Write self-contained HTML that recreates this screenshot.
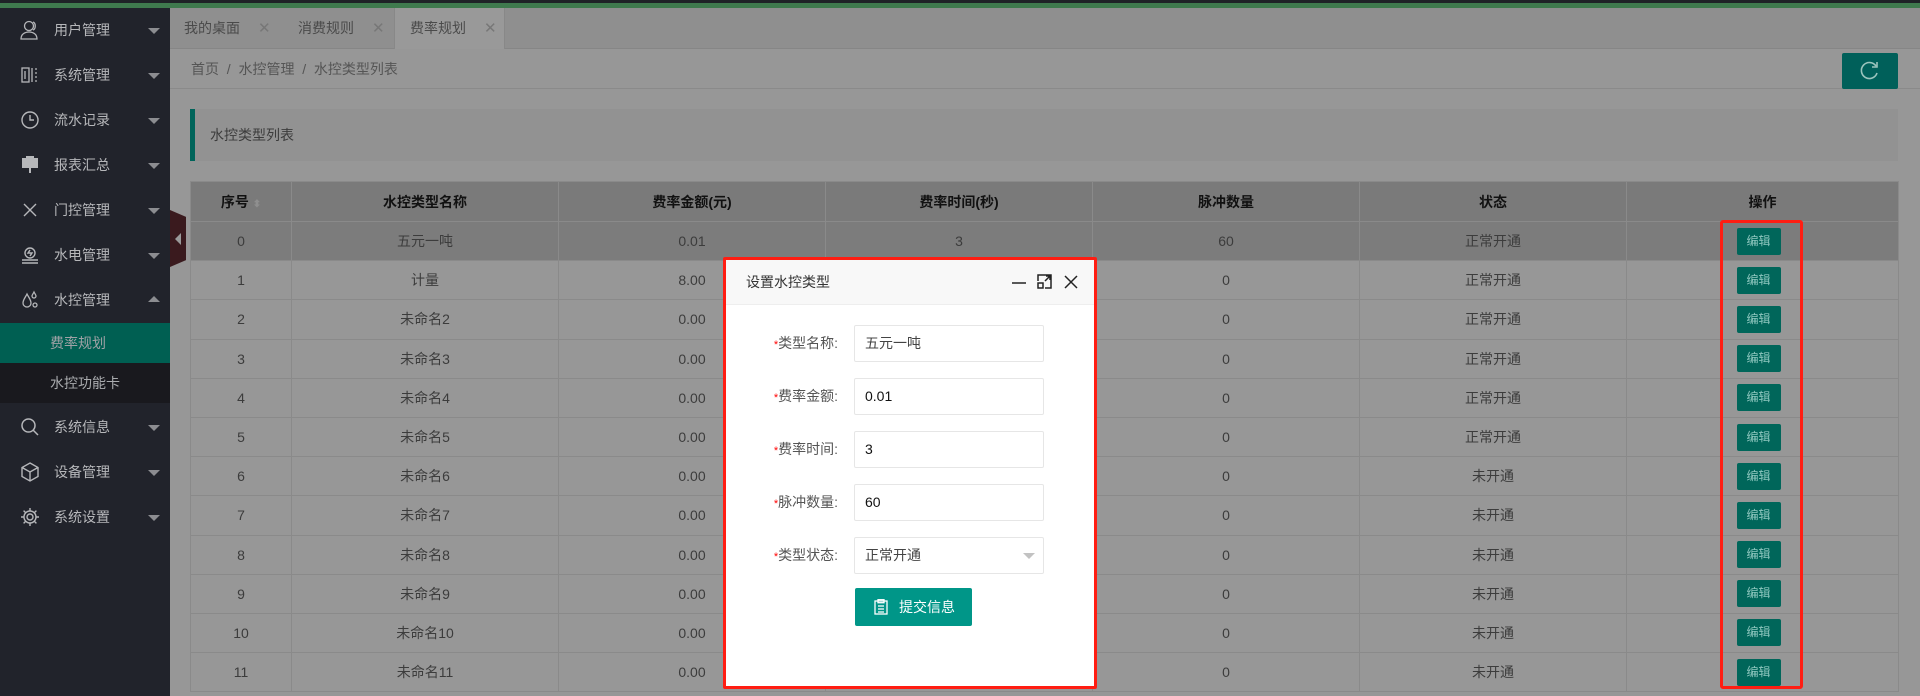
<!DOCTYPE html>
<html><head><meta charset="utf-8"><style>
*{margin:0;padding:0;box-sizing:border-box}
html,body{width:1920px;height:696px;overflow:hidden}
body{background:#979797;font-family:"Liberation Sans","Noto Sans CJK SC",sans-serif;font-size:14px}
#wrap{position:relative;width:1920px;height:696px;overflow:hidden;background:#979797}
.abs{position:absolute}
#top{left:0;top:0;width:1920px;height:3px;background:#1f2327}
#green{left:0;top:3px;width:1920px;height:5px;background:#3f7a4e}
#side{left:0;top:8px;width:170px;height:688px;background:#21232b}
.mi{position:absolute;left:0;width:170px;height:45px;color:#b6b7ba;font-size:14px;line-height:45px}
.mi .t{position:absolute;left:54px}
.mi svg{position:absolute;left:20px;top:12px}
.mi .ar{position:absolute;left:148px;top:20px;width:0;height:0;border-left:6px solid transparent;border-right:6px solid transparent;border-top:6px solid #8c8d91}
.mi .up{border-top:none;border-bottom:6px solid #8c8d91;top:18px}
.sub{position:absolute;left:0;width:170px;height:40px;line-height:40px;padding-left:50px;color:#9fa2a6}
#tabs{left:170px;top:8px;width:1750px;height:41px;background:#8f8f8f;border-bottom:1px solid #868686}
.tab{position:absolute;top:0;height:41px;line-height:40px;color:#4a4a4a;font-size:14px}
.tab .x{color:#777;margin-left:18px;font-size:15px}
#crumb{left:170px;top:49px;width:1750px;height:40px;border-bottom:1px solid #8a8a8a;line-height:40px;color:#555;padding-left:21px}
#refresh{left:1842px;top:53px;width:56px;height:36px;background:#00605a;border-radius:2px}
#title{left:190px;top:109px;width:1708px;height:52px;background:#929292;border-left:5px solid #00645a;line-height:52px;padding-left:15px;color:#3c3c3c;font-size:14px}
table{position:absolute;left:190px;top:181px;width:1708px;border-collapse:collapse;table-layout:fixed;font-size:14px}
td,th{border:1px solid #8a8a8a;text-align:center;height:39.2px;color:#3c3c3c;font-weight:normal;padding:0}
th{background:#7a7a7a;color:#111;font-weight:bold;height:40px}
tr.h td{background:#7c7c7c}
.eb{display:inline-block;width:44px;height:27px;line-height:27px;background:#00665a;color:#8fc7bf;font-size:12px;border-radius:2px;vertical-align:middle;margin-left:-8px}
#redbox{left:1720px;top:220px;width:83px;height:469px;border:3px solid #ff1d12;border-radius:3px}
#dlg{left:723px;top:257px;width:374px;height:432px;background:#fff;border:3px solid #ff1d12;border-radius:2px}
#dh{position:absolute;left:0;top:0;width:368px;height:45px;background:#f8f8f8;border-bottom:1px solid #eee;line-height:45px;padding-left:20px;color:#333;font-size:14px}
.lbl{position:absolute;left:30px;width:82px;text-align:right;color:#555;font-size:14px;line-height:37px}
.lbl b{color:#f00;font-weight:normal;font-size:11px}
.inp{position:absolute;left:128px;width:190px;height:37px;border:1px solid #e6e6e6;border-radius:2px;line-height:35px;padding-left:10px;color:#111;font-size:14px}
#btn{position:absolute;left:129px;top:328px;width:117px;height:38px;background:#009688;border-radius:2px;color:#fff;line-height:38px;font-size:14px;padding-left:44px}
</style></head><body><div id="wrap">
<div id="top" class="abs"></div><div id="green" class="abs"></div>
<div id="side" class="abs">
 <div class="mi" style="top:0"><svg width="20" height="20" viewBox="0 0 20 20" fill="none" stroke="#b6b7ba" stroke-width="1.3"><circle cx="9" cy="6" r="4.5"/><path d="M1 19c0-5 4-7 8-7s8 2 8 7z"/><path d="M13 2c3 1 3 7 0 8"/></svg><span class="t">用户管理</span><i class="ar"></i></div>
 <div class="mi" style="top:45px"><svg width="20" height="20" viewBox="0 0 20 20" fill="none" stroke="#b6b7ba" stroke-width="1.3"><rect x="2" y="3" width="7" height="14"/><path d="M5 6v8M12 3v14M15 4h2M15 8h2M15 12h2M15 16h2"/></svg><span class="t">系统管理</span><i class="ar"></i></div>
 <div class="mi" style="top:90px"><svg width="20" height="20" viewBox="0 0 20 20" fill="none" stroke="#b6b7ba" stroke-width="1.4"><circle cx="10" cy="10" r="8"/><path d="M10 5v5h4"/></svg><span class="t">流水记录</span><i class="ar"></i></div>
 <div class="mi" style="top:135px"><svg width="20" height="20" viewBox="0 0 20 20" fill="#b6b7ba"><rect x="2" y="3" width="16" height="10"/><rect x="9" y="13" width="2" height="5"/><rect x="6" y="1" width="8" height="2"/></svg><span class="t">报表汇总</span><i class="ar"></i></div>
 <div class="mi" style="top:180px"><svg width="20" height="20" viewBox="0 0 20 20" fill="none" stroke="#b6b7ba" stroke-width="1.4"><path d="M4 4l12 12M16 4L4 16"/></svg><span class="t">门控管理</span><i class="ar"></i></div>
 <div class="mi" style="top:225px"><svg width="20" height="20" viewBox="0 0 20 20" fill="none" stroke="#b6b7ba" stroke-width="1.4"><circle cx="10" cy="8" r="5"/><path d="M10 5l-2 3h4l-2 3M2 15h16M2 18h16"/></svg><span class="t">水电管理</span><i class="ar"></i></div>
 <div class="mi" style="top:270px"><svg width="20" height="20" viewBox="0 0 20 20" fill="none" stroke="#b6b7ba" stroke-width="1.3"><path d="M7 4C5 8 3 10 3 13a4 4 0 0 0 8 0c0-3-2-5-4-9zM14 2c-1 2-2 3-2 4a2 2 0 0 0 4 0c0-1-1-2-2-4z"/><circle cx="15" cy="15" r="2"/></svg><span class="t">水控管理</span><i class="ar up"></i></div>
 <div class="sub" style="top:315px;background:#005f52">费率规划</div>
 <div class="sub" style="top:355px;background:#19191e;color:#a9abae">水控功能卡</div>
 <div class="mi" style="top:397px"><svg width="20" height="20" viewBox="0 0 20 20" fill="none" stroke="#b6b7ba" stroke-width="1.5"><circle cx="8.5" cy="8.5" r="6.5"/><path d="M13 13l5 5"/></svg><span class="t">系统信息</span><i class="ar"></i></div>
 <div class="mi" style="top:442px"><svg width="20" height="20" viewBox="0 0 20 20" fill="none" stroke="#b6b7ba" stroke-width="1.4"><path d="M10 1l8 4.5v9L10 19l-8-4.5v-9z"/><path d="M2 5.5L10 10l8-4.5M10 10v9"/></svg><span class="t">设备管理</span><i class="ar"></i></div>
 <div class="mi" style="top:487px"><svg width="20" height="20" viewBox="0 0 20 20" fill="none" stroke="#b6b7ba" stroke-width="1.4"><circle cx="10" cy="10" r="3"/><path d="M10 1v3M10 16v3M1 10h3M16 10h3M3.6 3.6l2.1 2.1M14.3 14.3l2.1 2.1M3.6 16.4l2.1-2.1M14.3 5.7l2.1-2.1"/><circle cx="10" cy="10" r="6"/></svg><span class="t">系统设置</span><i class="ar"></i></div>
</div>
<div class="abs" style="left:170px;top:210px;width:16px;height:57px;background:#3a1a1e;clip-path:polygon(0 0,100% 12%,100% 88%,0 100%)"></div>
<div class="abs" style="left:175px;top:233px;width:0;height:0;border-top:6px solid transparent;border-bottom:6px solid transparent;border-right:6px solid #9a9a9a"></div>
<div id="tabs" class="abs">
 <div class="tab" style="left:14px">我的桌面<span class="x">✕</span></div>
 <div class="tab" style="left:128px">消费规则<span class="x">✕</span></div>
 <div class="tab" style="left:224px;width:111px;background:#999;padding-left:15px;border-left:1px solid #888;border-right:1px solid #888">费率规划<span class="x">✕</span></div>
</div>
<div id="crumb" class="abs">首页 &nbsp;/&nbsp; 水控管理 &nbsp;/&nbsp; 水控类型列表</div>
<div id="refresh" class="abs"><svg width="56" height="36" viewBox="0 0 56 36" fill="none" stroke="#9bc4bd" stroke-width="1.6"><path d="M34 13a8 8 0 1 0 1 7"/><path d="M35 9v5h-5"/></svg></div>
<div id="title" class="abs">水控类型列表</div>
<table>
<colgroup><col style="width:101px"><col style="width:267px"><col style="width:267px"><col style="width:267px"><col style="width:267px"><col style="width:267px"><col style="width:272px"></colgroup>
<tr><th>序号 <span style="color:#8f8f8f;font-size:10px">⬍</span></th><th>水控类型名称</th><th>费率金额(元)</th><th>费率时间(秒)</th><th>脉冲数量</th><th>状态</th><th>操作</th></tr>
<tr class="h"><td>0</td><td>五元一吨</td><td>0.01</td><td>3</td><td>60</td><td>正常开通</td><td><span class="eb">编辑</span></td></tr>
<tr><td>1</td><td>计量</td><td>8.00</td><td>0</td><td>0</td><td>正常开通</td><td><span class="eb">编辑</span></td></tr>
<tr><td>2</td><td>未命名2</td><td>0.00</td><td>0</td><td>0</td><td>正常开通</td><td><span class="eb">编辑</span></td></tr>
<tr><td>3</td><td>未命名3</td><td>0.00</td><td>0</td><td>0</td><td>正常开通</td><td><span class="eb">编辑</span></td></tr>
<tr><td>4</td><td>未命名4</td><td>0.00</td><td>0</td><td>0</td><td>正常开通</td><td><span class="eb">编辑</span></td></tr>
<tr><td>5</td><td>未命名5</td><td>0.00</td><td>0</td><td>0</td><td>正常开通</td><td><span class="eb">编辑</span></td></tr>
<tr><td>6</td><td>未命名6</td><td>0.00</td><td>0</td><td>0</td><td>未开通</td><td><span class="eb">编辑</span></td></tr>
<tr><td>7</td><td>未命名7</td><td>0.00</td><td>0</td><td>0</td><td>未开通</td><td><span class="eb">编辑</span></td></tr>
<tr><td>8</td><td>未命名8</td><td>0.00</td><td>0</td><td>0</td><td>未开通</td><td><span class="eb">编辑</span></td></tr>
<tr><td>9</td><td>未命名9</td><td>0.00</td><td>0</td><td>0</td><td>未开通</td><td><span class="eb">编辑</span></td></tr>
<tr><td>10</td><td>未命名10</td><td>0.00</td><td>0</td><td>0</td><td>未开通</td><td><span class="eb">编辑</span></td></tr>
<tr><td>11</td><td>未命名11</td><td>0.00</td><td>0</td><td>0</td><td>未开通</td><td><span class="eb">编辑</span></td></tr>
</table>
<div id="redbox" class="abs"></div>
<div id="dlg" class="abs">
 <div id="dh">设置水控类型
  <svg style="position:absolute;left:286px;top:14px" width="70" height="16" viewBox="0 0 70 16" fill="none" stroke="#222" stroke-width="1.5"><path d="M0 9h14"/><rect x="26" y="9" width="5" height="5"/><path d="M26 7V1h13v13h-6M33 7l5-5M34 2h4v4"/><path d="M53 2l12 12M65 2L53 14"/></svg>
 </div>
 <div class="lbl" style="top:65px"><b>*</b>类型名称:</div><div class="inp" style="top:65px;color:#444">五元一吨</div>
 <div class="lbl" style="top:118px"><b>*</b>费率金额:</div><div class="inp" style="top:118px">0.01</div>
 <div class="lbl" style="top:171px"><b>*</b>费率时间:</div><div class="inp" style="top:171px">3</div>
 <div class="lbl" style="top:224px"><b>*</b>脉冲数量:</div><div class="inp" style="top:224px">60</div>
 <div class="lbl" style="top:277px"><b>*</b>类型状态:</div><div class="inp" style="top:277px;color:#444">正常开通<i style="position:absolute;right:8px;top:15px;border-left:6px solid transparent;border-right:6px solid transparent;border-top:6px solid #c2c2c2"></i></div>
 <div id="btn"><svg style="position:absolute;left:19px;top:11px" width="14" height="16" viewBox="0 0 14 16" fill="none" stroke="#fff" stroke-width="1.3"><rect x="1" y="2" width="12" height="13"/><rect x="4" y="0.7" width="6" height="3"/><path d="M4 7h6M4 10h6M4 13h6"/></svg>提交信息</div>
</div>
</div></body></html>
